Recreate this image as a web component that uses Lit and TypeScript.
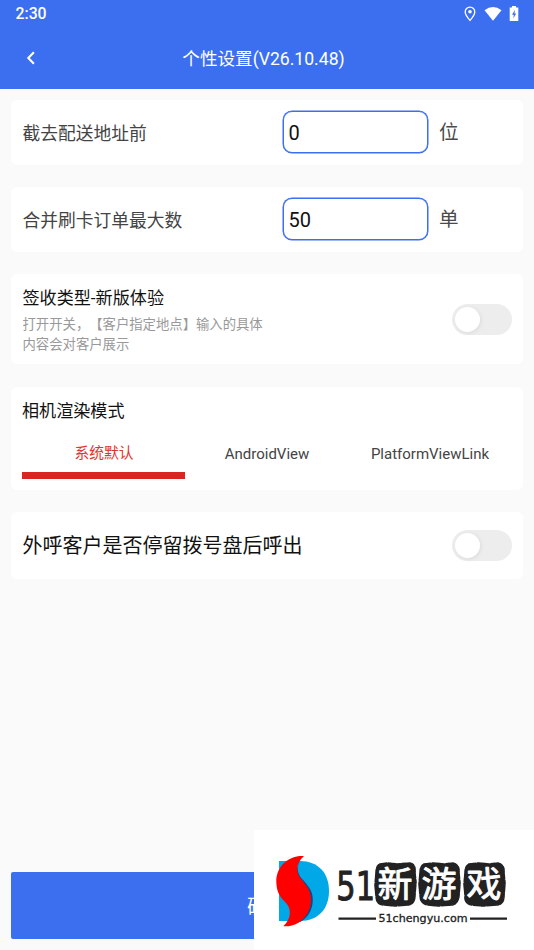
import { LitElement, html, css } from "lit";
import { customElement, property, state } from "lit/decorators.js";
import { classMap } from "lit/directives/class-map.js";

@customElement("toggle-switch")
class ToggleSwitch extends LitElement {
  @property({ type: Boolean, reflect: true }) on = false;

  static styles = css`
    :host { display: block; flex: none; }
    .track {
      box-sizing: border-box; width: 60px; height: 31px; padding: 3px;
      border-radius: 16px; background: #ededed; display: flex; cursor: pointer;
    }
    .track.on { background: #3c6ff0; justify-content: flex-end; }
    .thumb {
      width: 25px; height: 25px; border-radius: 50%; background: #fff;
      box-shadow: 1px 1px 4px rgba(0, 0, 0, 0.08);
    }
  `;

  render() {
    return html`<div class=${classMap({ track: true, on: this.on })}
      role="switch" aria-checked=${this.on} @click=${() => (this.on = !this.on)}>
      <div class="thumb"></div>
    </div>`;
  }
}

@customElement("site-mark")
class SiteMark extends LitElement {
  static styles = css`
    :host { display: block; background: #fff; }
    svg { display: block; }
    .digits { font: 39px "DejaVu Sans", sans-serif; fill: #222; stroke: #222; stroke-width: 1; stroke-linejoin: round; }
    .seal { fill: #222; stroke: #222; stroke-width: 1.6; stroke-dasharray: 7 1.5 4 1; stroke-linecap: round; }
    .glyph {
      font: 400 35px "Noto Sans CJK SC", sans-serif; fill: #fff;
      stroke: #fff; stroke-width: 0.9; stroke-linejoin: round;
    }
    .domain { font: 10.6px "DejaVu Sans", sans-serif; fill: #222; stroke: #222; stroke-width: 0.3; }
  `;

  render() {
    return html`<svg width="280" height="120" viewBox="0 0 280 120">
      <path fill="#00a8e8" d="M25 31H46C64 31 75 43 75 61C75 79 64 91 46 91H25Z"/>
      <path fill="#084a91" d="M46 30C42 36 43 45 50 51C58 60 59.5 65 58.5 74C57 83 52 89 46 92L40 93L52 68L41 44Z"/>
      <path fill="#f00" d="M50 26C35 25 22 36 22.3 52C22.5 63 27 68 32 73C38 79 37 89 29.3 96.2C44 98 57.5 85 57 69C56.5 60 53 56 48 50C41 42 42 33 50 26Z"/>
      <text class="digits" transform="translate(82.3 69.8) scale(.78 1)">51</text>
      <path class="seal" d="M126 34L133 33L143 34L156 33Q162 34 161 43L162 52L161 65Q161 75 153 75L141 76L130 75Q122 75 122 66L121 55L122 43Q122 36 126 34Z"/>
      <path class="seal" d="M170 34L179 33L190 34L199 33Q206 35 205 43L206 53L205 66Q204 75 197 75L184 76L174 75Q166 74 166 65L165 54L166 43Q166 36 170 34Z"/>
      <path class="seal" d="M215 34L225 33L235 34L244 33Q251 35 250 43L251 53L250 66Q250 75 242 75L229 76L218 75Q210 74 211 65L210 54L211 43Q211 36 215 34Z"/>
      <text class="glyph" x="123.6" y="67">新</text>
      <text class="glyph" x="167.6" y="67">游</text>
      <text class="glyph" x="212.6" y="67">戏</text>
      <path stroke="#222" stroke-width="2.2" d="M84.5 88.7H122M216 88.7H253"/>
      <text class="domain" x="124.5" y="92.3" textLength="89" lengthAdjust="spacingAndGlyphs">51chengyu.com</text>
    </svg>`;
  }
}

@customElement("app-root")
class AppRoot extends LitElement {
  @state() private mode = 0;
  private modes = ["系统默认", "AndroidView", "PlatformViewLink"];

  static styles = css`
    :host {
      display: flex; flex-direction: column; box-sizing: border-box; height: 950px;
      position: relative; overflow: hidden; background: #fafafa; text-spacing-trim: space-all;
      font-family: Roboto, "Noto Sans CJK SC", sans-serif; color: #111;
    }
    header { height: 89px; flex: none; background: #3c6ff0; color: #fff; }
    .status { height: 27px; display: flex; align-items: center; justify-content: space-between; padding: 0 15px 0 15.5px; }
    .clock { font-size: 15.8px; font-weight: 500; line-height: 27px; }
    .signals { display: flex; align-items: center; gap: 7px; height: 26px; }
    .signals svg, .back { display: block; }
    .pin { margin-right: 1px; }
    .bar { height: 62px; display: grid; grid-template-columns: 62px 1fr 62px; align-items: center; }
    .back { margin-left: 25px; }
    .title { text-align: center; font-size: 17.6px; line-height: 26px; padding: 1px 7px 0 0; white-space: nowrap; }
    main { flex: 1; padding: 11px 11px 0; display: flex; flex-direction: column; }
    .card { background: #fff; border-radius: 6px; box-sizing: border-box; padding: 0 11.5px; margin-bottom: 22px; display: flex; }
    .row { height: 65px; align-items: center; }
    .label { width: 260px; flex: none; font-size: 17.75px; line-height: 26px; color: #444; padding-top: 3px; }
    .field {
      box-sizing: border-box; width: 145px; height: 42px; border: 1px solid #3c6ff0; border-radius: 9px;
      box-shadow: 0 0 0 0.5px #3c6ff0; margin-bottom: 1px;
      padding: 2px 5px 0; font: 20px Roboto, sans-serif; color: #111; background: #fff; outline: none;
    }
    .unit { font-size: 19.6px; line-height: 28px; color: #4a4a4a; margin-left: 11.5px; padding-top: 1px; }
    .option { height: 90px; align-items: center; justify-content: space-between; margin-bottom: 23px; }
    .copy { width: 250px; padding-top: 2px; }
    .name { font-size: 17.1px; line-height: 25px; }
    .hint { font-size: 13.35px; line-height: 20px; color: #999; margin-top: 4px; }
    .camera { height: 103px; flex-direction: column; padding: 12px 12px 0 11px; }
    .tabs { display: grid; grid-template-columns: repeat(3, 1fr); margin-top: 14px; }
    .tab {
      height: 41px; box-sizing: border-box; border-bottom: 7px solid transparent; text-align: center;
      font-size: 15px; line-height: 32px; color: #444; cursor: pointer; padding-left: 1px;
    }
    .tab.active { font-size: 14.8px; line-height: 31px; color: #df3330; border-color: #d8251f; }
    .call { height: 67px; align-items: center; justify-content: space-between; }
    .large { font-size: 20px; line-height: 29px; padding-top: 2px; }
    .submit {
      height: 67px; margin: 0 11px 11px; border: 0; border-radius: 2px; background: #3c6ff0; color: #fff;
      font: 20px Roboto, "Noto Sans CJK SC", sans-serif; flex: none;
    }
    .mark { position: absolute; right: 0; bottom: 0; }
  `;

  private field(label: string, value: string, unit: string) {
    return html`<section class="card row">
      <span class="label">${label}</span>
      <input class="field" aria-label=${label} .value=${value} />
      <span class="unit">${unit}</span>
    </section>`;
  }

  render() {
    return html`
      <header>
        <div class="status">
          <span class="clock">2:30</span>
          <div class="signals">
            <svg class="pin" width="12" height="16" viewBox="0 0 12 16">
              <path d="M6 1.2C3.2 1.2 1.2 3.2 1.2 6C1.2 9 6 14.4 6 14.4S10.8 9 10.8 6C10.8 3.2 8.8 1.2 6 1.2Z" fill="none" stroke="#fff" stroke-width="1.3"/>
              <circle cx="6" cy="5.8" r="1.8" fill="#fff"/>
            </svg>
            <svg width="18" height="16" viewBox="0 0 18 16"><path d="M.5 4.2Q9-2.4 17.5 4.2L9 14.8Z" fill="#fff"/></svg>
            <svg width="10" height="16" viewBox="0 0 10 16">
              <path d="M3 0H7V1.5H9.3V15H.7V1.5H3Z" fill="#fff"/>
              <path d="M6 3.8L3 8.7H4.8L4.3 12.6L7.2 7.5H5.5Z" fill="#3c6ff0"/>
            </svg>
          </div>
        </div>
        <div class="bar">
          <svg class="back" width="12" height="16" viewBox="0 0 12 16"><path d="M8.9 2.3L3.3 8L8.9 13.7" fill="none" stroke="#fff" stroke-width="2.1"/></svg>
          <div class="title">个性设置(V26.10.48)</div>
        </div>
      </header>
      <main>
        ${this.field("截去配送地址前", "0", "位")}
        ${this.field("合并刷卡订单最大数", "50", "单")}
        <section class="card option">
          <div class="copy">
            <div class="name">签收类型-新版体验</div>
            <div class="hint">打开开关，【客户指定地点】输入的具体内容会对客户展示</div>
          </div>
          <toggle-switch></toggle-switch>
        </section>
        <section class="card camera">
          <div class="name">相机渲染模式</div>
          <div class="tabs">
            ${this.modes.map((m, i) => html`<div class=${classMap({ tab: true, active: i === this.mode })}
              @click=${() => (this.mode = i)}>${m}</div>`)}
          </div>
        </section>
        <section class="card call">
          <span class="large">外呼客户是否停留拨号盘后呼出</span>
          <toggle-switch></toggle-switch>
        </section>
      </main>
      <button class="submit">确定</button>
      <site-mark class="mark"></site-mark>
    `;
  }
}
